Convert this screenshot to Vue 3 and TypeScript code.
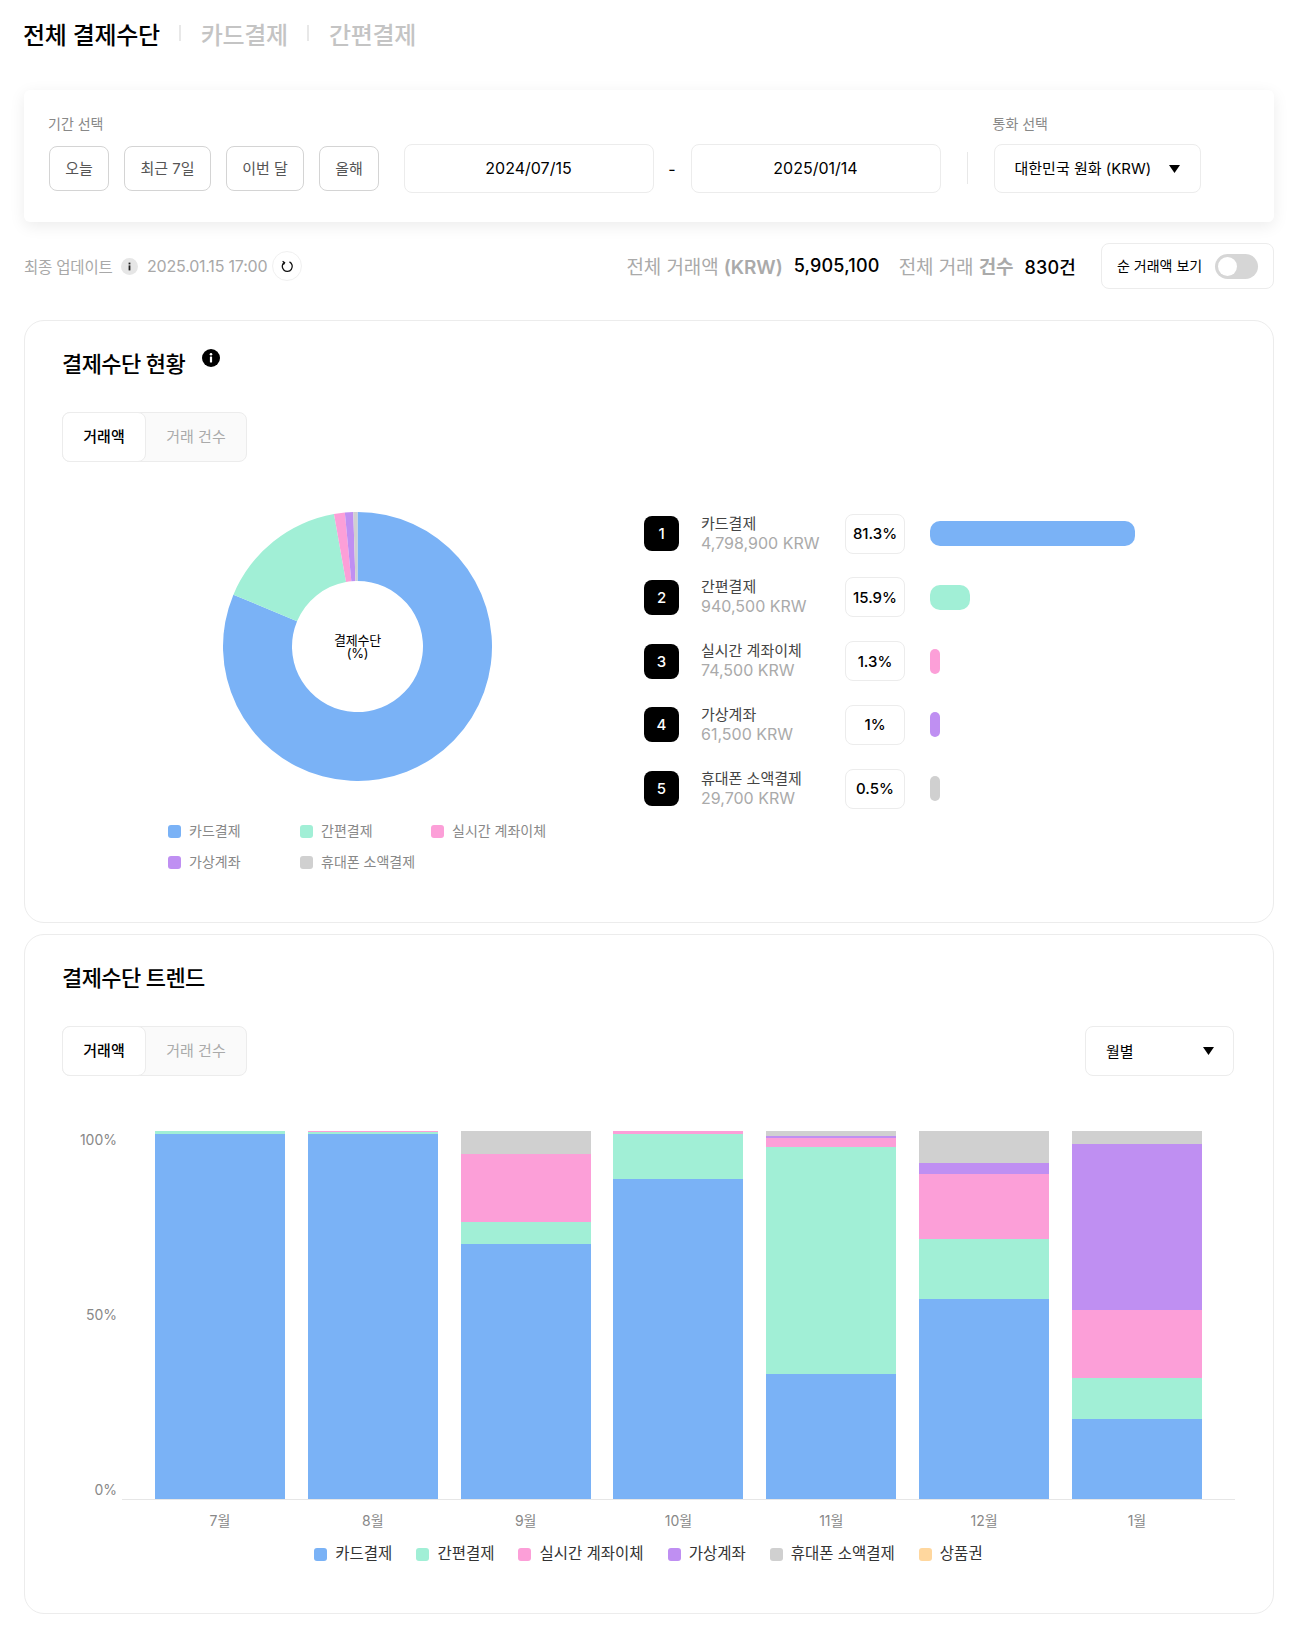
<script setup lang="ts">
const COLORS = {
  card: '#7ab2f6',
  easy: '#a1efd6',
  realtime: '#fc9fd8',
  virtual: '#bf8ff2',
  phone: '#d0d0d0',
  gift: '#ffd79e',
}

const chips = [
  { text: '오늘', width: '60px' },
  { text: '최근 7일', width: '87px' },
  { text: '이번 달', width: '78px' },
  { text: '올해', width: '60px' },
]
const tabs = ['거래액', '거래 건수']

const slices = [
  { name: '카드결제', amount: '4,798,900 KRW', pct: 81.3, label: '81.3%', color: COLORS.card },
  { name: '간편결제', amount: '940,500 KRW', pct: 15.9, label: '15.9%', color: COLORS.easy },
  { name: '실시간 계좌이체', amount: '74,500 KRW', pct: 1.3, label: '1.3%', color: COLORS.realtime },
  { name: '가상계좌', amount: '61,500 KRW', pct: 1, label: '1%', color: COLORS.virtual },
  { name: '휴대폰 소액결제', amount: '29,700 KRW', pct: 0.5, label: '0.5%', color: COLORS.phone },
]

const C = 134.5
const RO = 134.5
const RI = 65.5
function pt(r: number, frac: number): string {
  const a = frac * Math.PI * 2
  return `${(C + r * Math.sin(a)).toFixed(2)} ${(C - r * Math.cos(a)).toFixed(2)}`
}
let acc = 0
const arcs = slices.map((s) => {
  const from = acc / 100
  acc += s.pct
  const to = Math.min(acc, 99.999) / 100
  const large = to - from > 0.5 ? 1 : 0
  return {
    color: s.color,
    d: `M${pt(RO, from)}A${RO} ${RO} 0 ${large} 1 ${pt(RO, to)}L${pt(RI, to)}A${RI} ${RI} 0 ${large} 0 ${pt(RI, from)}Z`,
  }
})

function barWidth(p: number): string {
  return `${Math.max(10, p * 2.52)}px`
}

const PLOT = 368
const months = [
  { m: '7월', s: [[COLORS.easy, 3], [COLORS.card, 365]] },
  { m: '8월', s: [[COLORS.realtime, 1], [COLORS.easy, 2], [COLORS.card, 365]] },
  { m: '9월', s: [[COLORS.phone, 23], [COLORS.realtime, 68], [COLORS.easy, 22], [COLORS.card, 255]] },
  { m: '10월', s: [[COLORS.realtime, 3], [COLORS.easy, 45], [COLORS.card, 320]] },
  { m: '11월', s: [[COLORS.phone, 5], [COLORS.virtual, 2], [COLORS.realtime, 9], [COLORS.easy, 227], [COLORS.card, 125]] },
  { m: '12월', s: [[COLORS.phone, 32], [COLORS.virtual, 11], [COLORS.realtime, 65], [COLORS.easy, 60], [COLORS.card, 200]] },
  { m: '1월', s: [[COLORS.phone, 13], [COLORS.virtual, 166], [COLORS.realtime, 68], [COLORS.easy, 41], [COLORS.card, 80]] },
] as { m: string; s: [string, number][] }[]

const trendLegend = [
  ...slices.map((s) => ({ name: s.name, color: s.color })),
  { name: '상품권', color: COLORS.gift },
]
</script>

<template>
  <div class="page">
    <header class="head">
      <h1 class="tab-title active">전체 결제수단</h1>
      <i class="bar"></i>
      <span class="tab-title">카드결제</span>
      <i class="bar"></i>
      <span class="tab-title">간편결제</span>
    </header>

    <section class="filter">
      <div class="field">
        <div class="label">기간 선택</div>
        <div class="controls">
          <div class="chips">
            <button v-for="c in chips" :key="c.text" class="chip" :style="{ width: c.width }">{{ c.text }}</button>
          </div>
          <div class="date">2024/07/15</div>
          <span class="dash">-</span>
          <div class="date">2025/01/14</div>
        </div>
      </div>
      <i class="vsep"></i>
      <div class="field">
        <div class="label">통화 선택</div>
        <div class="select currency">
          <span>대한민국 원화 (KRW)</span>
          <svg class="caret" width="11" height="8" viewBox="0 0 11 8"><path d="M0 0h11L5.5 8z" /></svg>
        </div>
      </div>
    </section>

    <section class="status">
      <div class="updated">
        <span class="up-label">최종 업데이트</span>
        <svg class="mini-info" width="17" height="17" viewBox="0 0 17 17">
          <circle cx="8.5" cy="8.5" r="8.5" fill="#e6e6e6" />
          <rect x="7.6" y="7.4" width="1.8" height="5" fill="#222" />
          <rect x="7.6" y="4.6" width="1.8" height="1.8" fill="#222" />
        </svg>
        <span class="up-date">2025.01.15 17:00</span>
        <span class="refresh">
          <svg width="14" height="14" viewBox="0 0 14 14" fill="none" stroke="#111" stroke-width="1.3">
            <path d="M4.2 3.4A5 5 0 1 0 9.5 2.9" />
            <path d="M2.6 2.2 4.6 3.6 3.4 5.6" />
          </svg>
        </span>
      </div>
      <div class="totals">
        <span class="t-label">전체 거래액 <b>(KRW)</b></span>
        <span class="t-value">5,905,100</span>
        <span class="t-label second">전체 거래 <b>건수</b></span>
        <span class="t-value">830건</span>
        <div class="net">
          <span>순 거래액 보기</span>
          <span class="switch"><i></i></span>
        </div>
      </div>
    </section>

    <section class="card first">
      <h2 class="card-title">
        결제수단 현황
        <svg class="title-info" width="18" height="18" viewBox="0 0 18 18">
          <circle cx="9" cy="9" r="9" fill="#000" />
          <rect x="7.9" y="7.6" width="2.2" height="5.8" rx=".4" fill="#fff" />
          <circle cx="9" cy="5.2" r="1.3" fill="#fff" />
        </svg>
      </h2>
      <div class="segment">
        <span v-for="(t, i) in tabs" :key="t" class="seg" :class="{ on: i === 0 }">{{ t }}</span>
      </div>
      <div class="share">
        <div class="pie-col">
          <div class="donut">
            <svg width="269" height="269" viewBox="0 0 269 269">
              <path v-for="a in arcs" :key="a.color" :d="a.d" :fill="a.color" />
            </svg>
            <div class="donut-text">결제수단<br />(%)</div>
          </div>
          <div class="pie-legend">
            <div v-for="s in slices" :key="s.name" class="pl-item">
              <i class="swatch" :style="{ background: s.color }"></i>{{ s.name }}
            </div>
          </div>
        </div>
        <div class="rank">
          <div v-for="(s, i) in slices" :key="s.name" class="rank-row">
            <span class="badge">{{ i + 1 }}</span>
            <div class="rank-text">
              <div class="rank-name">{{ s.name }}</div>
              <div class="rank-amount">{{ s.amount }}</div>
            </div>
            <span class="pct">{{ s.label }}</span>
            <i class="rank-bar" :style="{ width: barWidth(s.pct), background: s.color }"></i>
          </div>
        </div>
      </div>
    </section>

    <section class="card second-card">
      <h2 class="card-title">결제수단 트렌드</h2>
      <div class="tools">
        <div class="segment flat">
          <span v-for="(t, i) in tabs" :key="t" class="seg" :class="{ on: i === 0 }">{{ t }}</span>
        </div>
        <div class="select period">
          <span>월별</span>
          <svg class="caret" width="11" height="8" viewBox="0 0 11 8"><path d="M0 0h11L5.5 8z" /></svg>
        </div>
      </div>
      <div class="chart">
        <div class="y-axis"><span>100%</span><span>50%</span><span>0%</span></div>
        <div class="plot">
          <div v-for="mo in months" :key="mo.m" class="stack">
            <i
              v-for="(seg, k) in mo.s"
              :key="k"
              :style="{ height: (seg[1] / PLOT) * 100 + '%', background: seg[0] }"
            ></i>
          </div>
        </div>
        <div></div>
        <div class="x-axis">
          <span v-for="mo in months" :key="mo.m">{{ mo.m }}</span>
        </div>
      </div>
      <div class="trend-legend">
        <div v-for="l in trendLegend" :key="l.name" class="tl-item">
          <i class="swatch" :style="{ background: l.color }"></i>{{ l.name }}
        </div>
      </div>
    </section>
  </div>
</template>

<style>
html,
body {
  margin: 0;
  background: #fff;
}
</style>

<style scoped>
.page {
  box-sizing: border-box;
  width: 1298px;
  height: 1642px;
  padding: 0 24px;
  font-family: Inter, "Noto Sans CJK KR", sans-serif;
  color: #000;
  background: #fff;
}
.head {
  display: flex;
  align-items: center;
  box-sizing: border-box;
  height: 70px;
  margin-left: -1px;
  padding-bottom: 4px;
}
.tab-title {
  margin: 0;
  font-size: 24px;
  font-weight: 500;
  color: #c4c4c4;
  letter-spacing: -0.3px;
}
.tab-title.active {
  color: #000;
}
.bar {
  width: 2px;
  height: 16px;
  margin: 0 20px 0 19px;
  background: #e8e8e8;
}
.filter {
  display: flex;
  box-sizing: border-box;
  height: 132px;
  margin-top: 20px;
  padding: 24px 25px 0;
  background: #fff;
  border-radius: 6px;
  box-shadow: 0 4px 16px rgba(0, 0, 0, 0.08);
}
.field {
  display: flex;
  flex-direction: column;
  gap: 10px;
}
.label {
  margin-left: -1px;
  font-size: 14px;
  line-height: 20px;
  color: #888;
}
.controls {
  display: flex;
  align-items: center;
  height: 49px;
}
.chips {
  display: flex;
  gap: 15px;
  margin-right: 24.5px;
}
.chip {
  box-sizing: border-box;
  height: 45px;
  padding: 0 0 2px;
  font: inherit;
  font-size: 15px;
  color: #555;
  background: #fff;
  border: 1px solid #d4d4d4;
  border-radius: 8px;
}
.date {
  box-sizing: border-box;
  display: flex;
  align-items: center;
  justify-content: center;
  width: 250px;
  height: 49px;
  padding-bottom: 2px;
  font-size: 16px;
  background: #fff;
  border: 1px solid #ececec;
  border-radius: 8px;
}
.dash {
  width: 37px;
  font-size: 16px;
  text-align: center;
}
.vsep {
  align-self: flex-start;
  width: 1px;
  height: 32px;
  margin: 38px 26px 0;
  background: #e8e8e8;
}
.select {
  box-sizing: border-box;
  display: flex;
  align-items: center;
  justify-content: space-between;
  height: 49px;
  font-size: 15px;
  background: #fff;
  border: 1px solid #ececec;
  border-radius: 8px;
}
.select span {
  padding-bottom: 2px;
}
.caret path {
  fill: #000;
}
.currency {
  width: 207px;
  padding: 0 20px;
}
.status {
  display: flex;
  align-items: center;
  justify-content: space-between;
  height: 46px;
  margin-top: 21px;
}
.updated {
  display: flex;
  align-items: center;
  color: #a8a8a8;
}
.up-label {
  font-size: 15.5px;
  letter-spacing: -0.2px;
}
.up-date {
  font-size: 16px;
  letter-spacing: -0.2px;
}
.mini-info {
  margin: 0 9px 0 8.5px;
}
.refresh {
  box-sizing: border-box;
  display: flex;
  align-items: center;
  justify-content: center;
  width: 30px;
  height: 30px;
  margin-left: 5px;
  border: 1px solid #f0f0f0;
  border-radius: 50%;
}
.totals {
  display: flex;
  align-items: center;
}
.t-label {
  padding-bottom: 2px;
  font-size: 19px;
  color: #aaa;
  letter-spacing: -0.1px;
}
.t-label b {
  font-weight: 600;
}
.t-label.second {
  margin-left: 19px;
}
.t-value {
  margin-left: 11px;
  padding-bottom: 1px;
  font-size: 18px;
  font-weight: 500;
  letter-spacing: 0.2px;
  color: #000;
}
.net {
  box-sizing: border-box;
  display: flex;
  align-items: center;
  justify-content: space-between;
  width: 173px;
  height: 46px;
  margin-left: 25px;
  padding: 0 15px;
  font-size: 14px;
  border: 1px solid #ececec;
  border-radius: 8px;
}
.net > span:first-child {
  padding-bottom: 2px;
}
.switch {
  display: flex;
  align-items: center;
  width: 43px;
  height: 25px;
  padding: 0 3px;
  box-sizing: border-box;
  background: #d6d6d6;
  border-radius: 13px;
}
.switch i {
  width: 19px;
  height: 19px;
  background: #fff;
  border-radius: 50%;
}
.card {
  box-sizing: border-box;
  padding: 28px 39px 0 37px;
  border: 1px solid #ececec;
  border-radius: 20px;
}
.first {
  height: 603px;
  margin-top: 31px;
}
.second-card {
  height: 680px;
  margin-top: 11px;
}
.card-title {
  position: relative;
  margin: 0;
  font-size: 22px;
  line-height: 30px;
  font-weight: 500;
  letter-spacing: -0.6px;
}
.title-info {
  position: absolute;
  left: 140px;
  top: 0;
}
.segment {
  display: inline-flex;
  box-sizing: border-box;
  width: 185px;
  height: 50px;
  margin-top: 33px;
  background: #fafafa;
  border: 1px solid #ececec;
  border-radius: 8px;
}
.segment.flat {
  margin-top: 0;
}
.seg {
  display: flex;
  flex: 1;
  align-items: center;
  justify-content: center;
  padding-bottom: 4px;
  font-size: 15px;
  color: #aaa;
}
.seg.on {
  flex: 0 0 84px;
  box-sizing: border-box;
  margin: -1px 0 -1px -1px;
  font-weight: 500;
  color: #000;
  background: #fff;
  border: 1px solid #ececec;
  border-radius: 8px;
}
.share {
  display: flex;
  margin-top: 50px;
}
.pie-col {
  width: 582px;
  flex: none;
}
.donut {
  position: relative;
  width: 269px;
  height: 269px;
  margin-left: 161px;
}
.donut svg {
  display: block;
}
.donut-text {
  position: absolute;
  left: 0;
  right: 0;
  top: 121.5px;
  font-size: 13px;
  line-height: 13px;
  letter-spacing: -0.2px;
  text-align: center;
}
.pie-legend {
  display: grid;
  grid-template-columns: 132px 131px auto;
  row-gap: 9px;
  margin: 39px 0 0 106px;
}
.pl-item,
.tl-item {
  display: flex;
  align-items: center;
  line-height: 22px;
}
.pl-item {
  font-size: 14px;
  color: #888;
}
.swatch {
  flex: none;
  width: 13px;
  height: 13px;
  margin-right: 8px;
  border-radius: 3px;
}
.rank {
  display: flex;
  flex-direction: column;
  gap: 23.75px;
  margin-top: 1.5px;
}
.rank-row {
  display: flex;
  align-items: center;
  height: 40px;
}
.badge {
  display: flex;
  align-items: center;
  justify-content: center;
  width: 35px;
  height: 35px;
  font-size: 15px;
  font-weight: 500;
  color: #fff;
  background: #000;
  border-radius: 8px;
}
.rank-text {
  width: 144px;
  margin-left: 22px;
  padding-bottom: 1px;
}
.rank-name {
  font-size: 15px;
  line-height: 20px;
  color: #444;
}
.rank-amount {
  margin-top: -1px;
  font-size: 16px;
  line-height: 20px;
  color: #aaa;
}
.pct {
  box-sizing: border-box;
  display: flex;
  align-items: center;
  justify-content: center;
  width: 60px;
  height: 40px;
  font-size: 15px;
  font-weight: 450;
  border: 1px solid #ececec;
  border-radius: 8px;
}
.rank-bar {
  height: 25px;
  margin-left: 25px;
  border-radius: 10px;
}
.tools {
  display: flex;
  align-items: center;
  justify-content: space-between;
  margin-top: 33px;
}
.period {
  width: 149px;
  height: 50px;
  padding: 0 19px 0 20px;
}
.chart {
  display: grid;
  grid-template-columns: 60px 1113px;
  margin-top: 55px;
}
.y-axis {
  display: flex;
  flex-direction: column;
  align-items: flex-end;
  justify-content: space-between;
  padding: 0 5px 1px 0;
  font-size: 14px;
  line-height: 18px;
  color: #888;
}
.plot {
  display: flex;
  justify-content: space-between;
  height: 368px;
  padding: 0 33px;
  border-bottom: 1px solid #e6e6e6;
}
.stack {
  display: flex;
  flex-direction: column;
  width: 130px;
}
.stack i {
  display: block;
}
.x-axis {
  display: flex;
  justify-content: space-between;
  margin-top: 11px;
  padding: 0 33px;
  font-size: 14px;
  line-height: 20px;
  color: #888;
}
.x-axis span {
  width: 130px;
  text-align: center;
}
.trend-legend {
  display: flex;
  justify-content: center;
  gap: 24px;
  width: 1173px;
  margin-top: 12px;
}
.tl-item {
  font-size: 15.5px;
  color: #333;
}
</style>
